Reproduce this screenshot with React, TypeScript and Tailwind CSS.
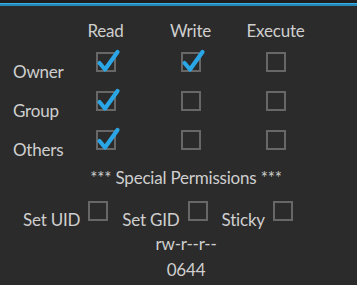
import React from "react";

const Check = () => (
  <svg
    className="absolute left-0 top-0 overflow-visible pointer-events-none"
    width="20"
    height="20"
    viewBox="0 0 20 20"
  >
    <path
      d="M3.5 11 L9 17.5 L21.5 0"
      fill="none"
      stroke="#2aa6e6"
      strokeWidth="4.2"
      strokeLinecap="round"
      strokeLinejoin="round"
    />
  </svg>
);

const Box = ({ checked }: { checked?: boolean }) => (
  <div className="relative w-[20px] h-[20px]">
    <div className="w-[20px] h-[20px] border-2 border-[#676767]" />
    {checked && <Check />}
  </div>
);

const rows: { label: string; vals: boolean[] }[] = [
  { label: "Owner", vals: [true, true, false] },
  { label: "Group", vals: [true, false, false] },
  { label: "Others", vals: [true, false, false] },
];

export default function App() {
  return (
    <div
      className="w-[357px] h-[285px] bg-[#2b2b2b] text-[#cfcfcf] overflow-hidden text-[17px] leading-[24px] tracking-[-0.2px]"
      style={{ fontFamily: 'Lato, "Open Sans", sans-serif' }}
    >
      <div className="h-[3px] bg-[#1f1f1f]" />
      <div className="h-[1px] bg-[#3cb0e4]" />
      <div className="h-[2px] bg-[#2588b8]" />

      <div className="grid grid-cols-[63px_85px_85px_85px] mt-[13px]">
        <div />
        <div className="text-center">Read</div>
        <div className="text-center">Write</div>
        <div className="text-center">Execute</div>
      </div>

      <div className="mt-[9px]">
        {rows.map((r, i) => (
          <div
            key={r.label}
            className={`grid grid-cols-[63px_85px_85px_85px] ${i === 2 ? "h-[36px]" : "h-[39px]"}`}
          >
            <div className="pl-[13px] pt-[8px]">{r.label}</div>
            {r.vals.map((v, j) => (
              <div key={j} className="flex justify-center">
                <Box checked={v} />
              </div>
            ))}
          </div>
        ))}
      </div>

      <div className="text-center pl-[15px]">*** Special Permissions ***</div>

      <div className="flex pl-[23px] mt-[11px] gap-[14px]">
        {["Set UID", "Set GID", "Sticky"].map((l) => (
          <div key={l} className="flex gap-[8px]">
            <div className="pt-[7px]">{l}</div>
            <Box />
          </div>
        ))}
      </div>

      <div className="text-center pl-[15px]">rw-r--r--</div>
      <div className="text-center pl-[15px] mt-[2px]">0644</div>
    </div>
  );
}
